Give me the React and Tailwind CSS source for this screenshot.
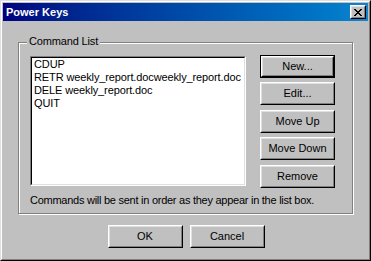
import React from "react";

const font = { fontFamily: '"Liberation Sans", Arial, sans-serif' };

function Btn({ label, def, className = "" }) {
  const face = (
    <div className="h-full w-full border border-t-white border-l-white border-r-black border-b-black">
      <div className="h-full w-full border border-t-[#dfdfdf] border-l-[#dfdfdf] border-r-[#808080] border-b-[#808080] flex items-center justify-center text-[11px] text-black">
        {label}
      </div>
    </div>
  );
  return (
    <button className={`block w-[75px] h-[23px] bg-[#c0c0c0] p-0 ${def ? "border border-black" : ""} ${className}`}>
      {face}
    </button>
  );
}

export default function App() {
  const commands = ["CDUP", "RETR weekly_report.docweekly_report.doc", "DELE weekly_report.doc", "QUIT"];

  return (
    <div style={font} className="w-[371px] h-[261px] bg-[#c0c0c0] border border-t-[#dfdfdf] border-l-[#dfdfdf] border-r-black border-b-black">
      <div className="h-full border border-t-white border-l-white border-r-[#808080] border-b-[#808080] p-px flex flex-col">
        {/* title bar */}
        <div className="h-[18px] flex items-center justify-between pl-[3px] pr-[2px] bg-linear-to-r from-[#000080] to-[#1084d0]">
          <span className="text-white font-bold text-[11px] leading-none">Power Keys</span>
          <button className="w-[16px] h-[14px] bg-[#c0c0c0] border border-t-white border-l-white border-r-black border-b-black p-0">
            <div className="h-full w-full border border-t-[#dfdfdf] border-l-[#dfdfdf] border-r-[#808080] border-b-[#808080] flex items-center justify-center">
              <svg width="8" height="7" viewBox="0 0 8 7" shapeRendering="crispEdges">
                <path d="M0 0h2v1H0zM6 0h2v1H6zM1 1h2v1H1zM5 1h2v1H5zM2 2h4v1H2zM3 3h2v1H3zM2 4h4v1H2zM1 5h2v1H1zM5 5h2v1H5zM0 6h2v1H0zM6 6h2v1H6z" fill="#000" />
              </svg>
            </div>
          </button>
        </div>

        {/* group box */}
        <div className="relative ml-[15px] mt-[21px] w-[335px] h-[172px] border border-[#808080] shadow-[1px_1px_0_#fff,inset_1px_1px_0_#fff]">
          <span className="absolute left-[8px] top-[-8px] px-[2px] bg-[#c0c0c0] text-[11px] leading-[13px] tracking-[-0.15px] text-black">
            Command List
          </span>
          <div className="flex items-start pl-[11px] pt-[12px]">
            <div className="mt-px w-[216px] h-[130px] border border-t-[#808080] border-l-[#808080] border-r-white border-b-white">
              <div className="h-full border border-t-black border-l-black border-r-[#dfdfdf] border-b-[#dfdfdf] bg-white pl-[2px] text-[11px] leading-[13px] tracking-[-0.12px] text-black">
                {commands.map((c) => (
                  <div key={c} className="whitespace-nowrap">{c}</div>
                ))}
              </div>
            </div>
            <div className="ml-[14px] flex flex-col">
              <Btn label="New..." def />
              <Btn label="Edit..." className="mt-[4px]" />
              <Btn label="Move Up" className="mt-[5px]" />
              <Btn label="Move Down" className="mt-[4px]" />
              <Btn label="Remove" className="mt-[5px]" />
            </div>
          </div>
          <p className="pl-[11px] mt-[6px] text-[11px] leading-[13px] tracking-[-0.26px] text-black whitespace-nowrap">
            Commands will be sent in order as they appear in the list box.
          </p>
        </div>

        {/* bottom buttons */}
        <div className="mt-[11px] flex justify-center gap-[7px] pl-px">
          <Btn label="OK" />
          <Btn label="Cancel" />
        </div>
      </div>
    </div>
  );
}
